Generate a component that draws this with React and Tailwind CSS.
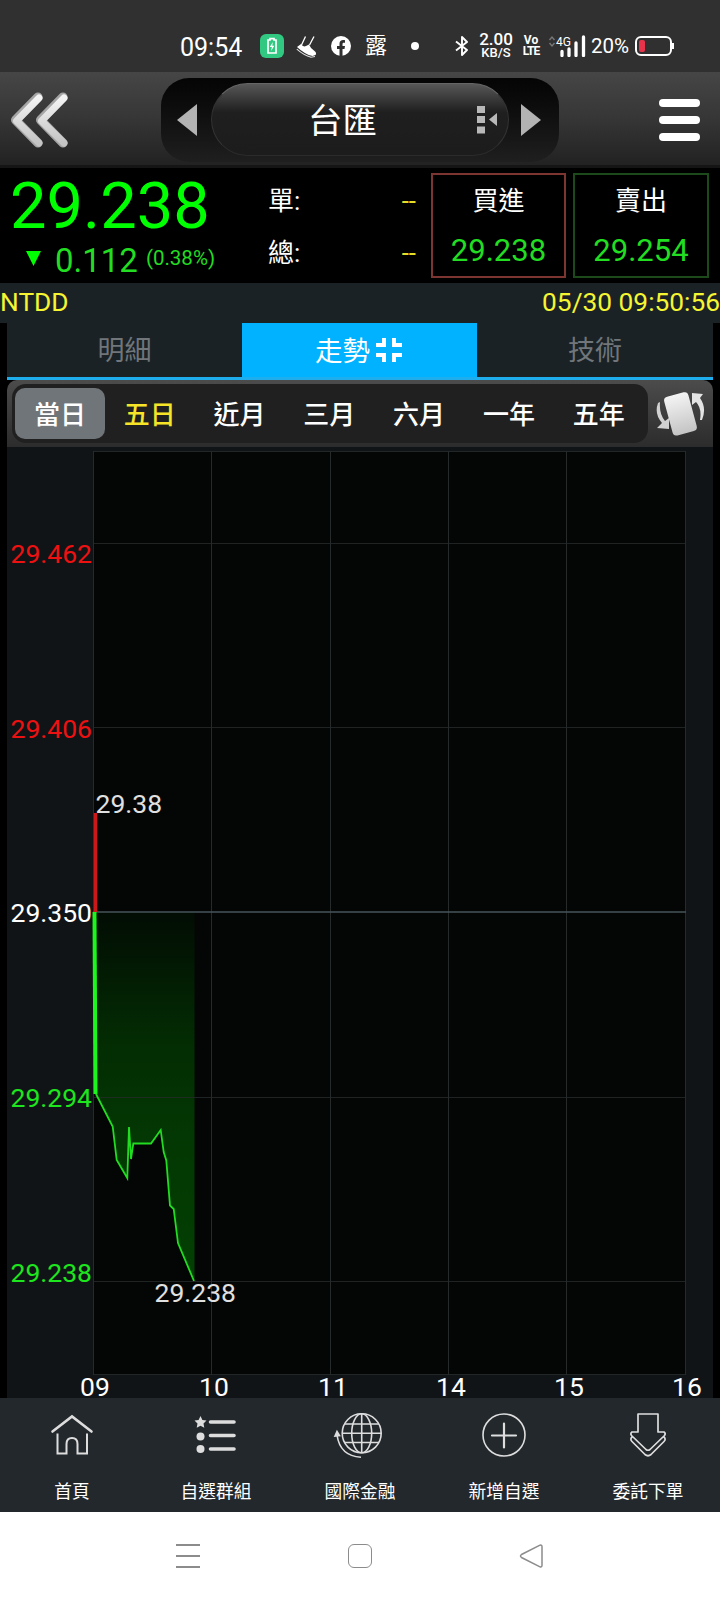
const hours = ['09', '10', '11', '14', '15', '16'];
const hourX = [95, 214, 333, 451, 569, 687];
const gridX = [93.5, 211.5, 330.5, 448.5, 566.5, 685.5];
const gridY = [451.5, 543.5, 727.5, 1097.5, 1281.5, 1374.5];

const priceLabels = [
  { text: '29.462', y: 563, color: '#ee1111' },
  { text: '29.406', y: 738, color: '#ee1111' },
  { text: '29.350', y: 922, color: '#ffffff' },
  { text: '29.294', y: 1107, color: '#1ee61e' },
  { text: '29.238', y: 1282, color: '#1ee61e' },
];

const trend =
  '96,1094 112.7,1126.5 116.7,1160 127.3,1178 129,1127 131,1159 133.3,1143.5 151,1143.5 160.7,1130 163.7,1152 166.3,1160.5 170,1205.5 173.7,1209 178,1243 194,1281';

const ranges = ['當日', '五日', '近月', '三月', '六月', '一年', '五年'];

function StatusBar() {
  return (
    <div className="h-[72px] bg-[#303030] flex items-center pt-5 text-white">
      <span className="ml-[180px] w-[80px] pt-[2px] text-[25px] leading-none">09:54</span>
      <svg className="w-6 h-6" viewBox="0 0 24 24">
        <rect width="24" height="24" rx="6" fill="#31c981" />
        <path d="M8 6h2V4.6h4V6h2v13H8z" fill="none" stroke="#fff" strokeWidth="1.7" />
        <path d="M12.8 8 9.8 13h2l-.7 4 3.2-5.200h-2z" fill="#fff" />
      </svg>
      <svg className="ml-3 w-[22px] h-[24px]" viewBox="0 0 22 24">
        <path d="M9.500 2.500 5.500 11M18 2.500 13.500 11" stroke="#fff" strokeWidth="1.300" fill="none" />
        <path d="M1 13l4-3q2 3.500 5 2l3-1.500q1.500 4 5.500 6.500 2.500 2 1 4l-3 1Q9 20.500 1 13z" fill="#fff" />
        <path d="M.8 15.200Q8 21.500 15 23.200l4-.7" stroke="#ddd" strokeWidth="1.100" fill="none" />
      </svg>
      <svg className="ml-[13px] w-5 h-5" viewBox="0 0 20 20">
        <circle cx="10" cy="10" r="10" fill="#fff" />
        <path d="M8.500 20v-7H6v-3h2.500V7.800C8.500 5.200 10 4 12.200 4c1 0 1.800.2 1.800.2v2.500h-1.200c-1 0-1.300.6-1.300 1.400V10h2.500l-.5 3h-2v7z" fill="#303030" />
      </svg>
      <span className="ml-[14px] w-[22px] text-[22px] leading-none">露</span>
      <span className="ml-[24px] w-2 h-2 rounded-full bg-white" />
      <svg className="ml-[35px] w-4 h-5" viewBox="0 0 16 20">
        <path d="M2 5.500 13 14 8 19V1l5 5L2 14.500" fill="none" stroke="#fff" strokeWidth="1.9" strokeLinejoin="round" />
      </svg>
      <div className="ml-2 w-[36px] text-center font-medium">
        <div className="text-[17px] leading-[13px]">2.00</div>
        <div className="text-[13px] leading-[13px]">KB/S</div>
      </div>
      <div className="ml-2 w-[18px] text-center font-bold">
        <div className="text-[12px] leading-[11px]">Vo</div>
        <div className="text-[12px] leading-[11px] tracking-[-1px]">LTE</div>
      </div>
      <svg className="ml-[8px] w-[38px] h-[22px]" viewBox="0 0 38 22">
        <path d="m1.500 5 2.500-3 2.500 3M1.500 8 4 11l2.500-3" fill="none" stroke="#777" strokeWidth="1.400" />
        <text x="8" y="11" fontSize="13" fill="#fff" textLength="15" lengthAdjust="spacingAndGlyphs">4G</text>
        <path d="M14 16.500v4M21 14v6.500M28 8v12.500M35.500 2v18.500" stroke="#fff" strokeWidth="3.300" strokeLinecap="round" />
      </svg>
      <span className="ml-[5px] w-[44px] text-[20.500px] leading-none">20%</span>
      <svg className="w-[40px] h-5" viewBox="0 0 40 20">
        <rect x="1" y="1" width="35" height="18" rx="5" fill="none" stroke="#fff" strokeWidth="2" />
        <rect x="4" y="4" width="6" height="12" rx="2" fill="#e8344a" />
        <path d="M38 7v6" stroke="#fff" strokeWidth="2" />
      </svg>
    </div>
  );
}

function Header() {
  return (
    <div className="h-24 bg-linear-to-b from-[#464646] via-[#363636] to-[#222] border-b-3 border-[#151515] pt-[2px] flex items-center">
      <svg className="ml-[9px] w-[62px] h-[60px]" viewBox="0 0 62 60">
        <defs>
          <linearGradient id="metal" x1="0" y1="0" x2="0" y2="1">
            <stop offset="0" stopColor="#f4f4f4" />
            <stop offset="1" stopColor="#c4c4c4" />
          </linearGradient>
        </defs>
        <path d="M29 7 6.500 30 29 53M54 7 31.500 30 54 53" fill="none" stroke="#a5a5a5" strokeWidth="9" strokeLinecap="round" strokeLinejoin="round" />
        <path d="M30 8 7.500 31 30 53M55 8 32.500 31 55 53" fill="none" stroke="url(#metal)" strokeWidth="7" strokeLinecap="round" strokeLinejoin="round" />
      </svg>
      <div className="ml-[90px] w-[398px] h-[84px] rounded-[28px] bg-linear-to-b from-[#050505] to-[#1f1f1f] flex items-center px-4">
        <svg className="w-5 h-8" viewBox="0 0 20 32">
          <path d="M20 0v32L0 16z" fill="#b3b3b3" />
        </svg>
        <div className="ml-[14px] w-[298px] h-[73px] rounded-full bg-linear-to-b from-[#585858] via-[#1f1f1f] via-40% to-[#1c1c1c] border border-t-[#666] border-x-[#333] border-b-[#2b2b2b] flex items-center">
          <div className="flex-1 pl-[96px] pt-[3px] text-white text-[34.500px] leading-none">台匯</div>
          <svg className="mr-[10px] w-[22px] h-[30px]" viewBox="0 0 22 30">
            <path d="M1 1h8v7H1zM1 11h8v7H1zM1 21.500h8v7H1zM21 8v13l-8-6.500z" fill="#b8b8b8" />
          </svg>
        </div>
        <svg className="ml-[12px] w-5 h-8" viewBox="0 0 20 32">
          <path d="M0 0v32l20-16z" fill="#b3b3b3" />
        </svg>
      </div>
      <div className="ml-auto mr-5 flex flex-col gap-[9px]">
        <div className="w-[41px] h-2 rounded-full bg-white" />
        <div className="w-[41px] h-2 rounded-full bg-white" />
        <div className="w-[41px] h-2 rounded-full bg-white" />
      </div>
    </div>
  );
}

function Quote() {
  return (
    <div className="h-[115px] bg-black flex">
      <div className="w-[268px] pl-[10px]">
        <div className="mt-[6px] h-[64px] text-[65px] leading-[64px] text-[#00ff00]">29.238</div>
        <div className="flex items-center h-[40px] text-[#22dd22]">
          <svg className="ml-4 w-[15px] h-[15px]" viewBox="0 0 15 15">
            <path d="M0 0h15L7.500 15z" fill="#00ff00" />
          </svg>
          <span className="ml-[14px] pt-1 text-[33px] leading-none">0.112</span>
          <span className="ml-[8px] text-[20.500px] leading-none">(0.38%)</span>
        </div>
      </div>
      <div className="w-[148px] pt-[7px] text-[26px] text-white">
        <div className="flex justify-between h-[52px] items-center">
          <span>單:</span>
          <span className="text-[#e6dc28]">--</span>
        </div>
        <div className="flex justify-between h-[52px] items-center">
          <span>總:</span>
          <span className="text-[#e6dc28]">--</span>
        </div>
      </div>
      <div className="ml-[15px] mt-[5px] w-[135px] h-[105px] border-2 border-[#7d3532] text-center">
        <div className="h-[50px] leading-[52px] text-[26px] text-white">買進</div>
        <div className="h-[50px] leading-[52px] text-[31px] text-[#22dd22]">29.238</div>
      </div>
      <div className="ml-[7px] mt-[5px] w-[136px] h-[105px] border-2 border-[#1d4a1a] text-center">
        <div className="h-[50px] leading-[52px] text-[26px] text-white">賣出</div>
        <div className="h-[50px] leading-[52px] text-[31px] text-[#22dd22]">29.254</div>
      </div>
    </div>
  );
}

function Tabs() {
  return (
    <div className="h-[57px] bg-black px-[7px]">
      <div className="h-full grid grid-cols-[235px_235px_236px] bg-[#1b2226] border-b-3 border-[#1eaeee] text-[27px] text-[#70767a]">
        <div className="flex items-center justify-center pt-[3px]">明細</div>
        <div className="flex items-center justify-center gap-[6px] pr-[2px] bg-[#00b2ff] text-[27.500px] text-white">
          <span className="pt-[3px]">走勢</span>
          <svg className="w-[26px] h-[26px]" viewBox="0 0 26 26">
            <path d="M0 8h8V1M18 1v7h8M0 18h8v7M18 25v-7h8" fill="none" stroke="#fff" strokeWidth="4" />
          </svg>
        </div>
        <div className="flex items-center justify-center pt-[3px]">技術</div>
      </div>
    </div>
  );
}

function RangeBar() {
  return (
    <div className="h-[67px] bg-black px-[7px]">
      <div className="h-full rounded-t-[10px] bg-linear-to-b from-[#4c4c4c] to-[#2c2c2c] flex items-center">
        <div className="ml-[5px] w-[636px] h-[59px] rounded-[14px] bg-[#202020] flex items-center pl-[3px]">
          {ranges.map((name, i) => (
            <div
              key={name}
              className={`w-[89.8px] h-[51px] pt-[3px] rounded-[10px] flex items-center justify-center text-[26px] font-medium ${
                i === 0 ? 'bg-[#70757a] text-white' : i === 1 ? 'text-[#f5e428]' : 'text-white'
              }`}
            >
              {name}
            </div>
          ))}
        </div>
        <svg className="ml-[7px] w-[50px] h-[48px]" viewBox="0 0 50 48">
          <path d="M3 13q-4 11 4 20l-5 5 12 1V28l-4 3Q4 24 5 12z" fill="#d2d2d2" />
          <path d="M37 3l11 1-3 4q7 10 2 22h-2q2-12-4-18l-4 3z" fill="#e4e4e4" />
          <rect x="13" y="4" width="25" height="40" rx="4" transform="rotate(-15 25 24)" fill="url(#metal)" />
        </svg>
      </div>
    </div>
  );
}

function Chart() {
  return (
    <div className="h-[951px] bg-black px-[7px]">
      <svg className="block w-[706px] h-[951px] overflow-visible" viewBox="7 447 706 951" fontSize="26.5">
        <defs>
          <linearGradient id="loss" gradientUnits="userSpaceOnUse" x1="0" y1="912" x2="0" y2="1281">
            <stop offset="0" stopColor="#020c03" />
            <stop offset="0.35" stopColor="#032c03" />
            <stop offset="0.6" stopColor="#033703" />
            <stop offset="1" stopColor="#034003" />
          </linearGradient>
        </defs>
        <rect x="7" y="447" width="706" height="951" fill="#111417" />
        <rect x="94" y="452" width="591" height="922" fill="#040605" />
        <polygon points={`96,912 ${trend} 194.500,1281 194.500,912`} fill="url(#loss)" />
        {gridX.map((x) => (
          <path key={x} d={`M${x} 451V1375`} stroke="#272a2a" />
        ))}
        {gridY.map((y) => (
          <path key={y} d={`M93 ${y}H686`} stroke="#272a2a" strokeOpacity="0.8" />
        ))}
        <path d="M93 912H686" stroke="#46555a" strokeWidth="1.300" />
        <path d="M95.500 813V912" stroke="#cc1818" strokeWidth="3.500" />
        <path d="M94.500 912L95.500 1094" stroke="#1ef51e" strokeWidth="4" />
        <polyline points={trend} fill="none" stroke="#22dc22" strokeWidth="1.800" />
        {priceLabels.map((l) => (
          <text key={l.text} x="10.500" y={l.y} fill={l.color}>{l.text}</text>
        ))}
        <text x="95.500" y="813" fill="#e0e0e0">29.38</text>
        <text x="154.500" y="1302" fill="#e0e0e0">29.238</text>
        {hours.map((h, i) => (
          <text key={h} x={hourX[i]} y="1396" textAnchor="middle" fill="#fff">{h}</text>
        ))}
      </svg>
    </div>
  );
}

const navItems = [
  {
    label: '首頁',
    icon: (
      <g strokeWidth="2">
        <path d="M4.500 20.500 24 5.500l19.500 15" strokeWidth="2.600" strokeLinecap="round" />
        <path d="M9.500 22.500V42.500h9V33q0-6 5.500-6t5.500 6v9.500h9.500V22.500" />
      </g>
    ),
  },
  {
    label: '自選群組',
    icon: (
      <g>
        <path d="m8.500 5 1.900 3.900 4.100.5-3 3 .8 4.300-3.800-2-3.800 2 .8-4.300-3-3 4.100-.5z" fill="#ddd" stroke="none" />
        <circle cx="8.500" cy="25.500" r="4" fill="#ddd" stroke="none" />
        <circle cx="8.500" cy="38" r="4" fill="#ddd" stroke="none" />
        <path d="M18.500 11h23.500M18.500 24.500h23.500M18.500 38h23.500" strokeWidth="3.600" strokeLinecap="round" />
      </g>
    ),
  },
  {
    label: '國際金融',
    icon: (
      <g strokeWidth="1.600">
        <circle cx="25.700" cy="22.300" r="19.500" />
        <ellipse cx="25.700" cy="22.300" rx="10" ry="19.500" />
        <path d="M25.700 2.800v39M6.200 22.300h39M8.700 13h34M8.700 31.500h34" />
        <path d="M1 24Q4 45 25 46.300" />
        <path d="M-1 25l2-4.500 2.500 4z" fill="#ddd" />
      </g>
    ),
  },
  {
    label: '新增自選',
    icon: (
      <g strokeWidth="1.600">
        <circle cx="24" cy="24" r="21" />
        <path d="M24 12.500v24M12 24.500h24" strokeWidth="2.200" strokeLinecap="round" />
      </g>
    ),
  },
  {
    label: '委託下單',
    icon: (
      <g strokeWidth="1.700" strokeLinejoin="round">
        <path d="M14 3h20v18h6q2 1.500.5 3.500L26 38.500q-2 1.500-4 0L7.500 24.500q-1.500-2 .5-3.500h6z" />
        <path d="M8.500 25.500q-3 2.500-.5 5l13 13q3 2.500 6 0l13-13q2.500-2.500-.5-5" />
      </g>
    ),
  },
];

function BottomNav() {
  return (
    <div className="h-[114px] bg-[#23282c] grid grid-cols-5">
      {navItems.map((item) => (
        <div key={item.label} className="flex flex-col items-center pt-[13px] text-white">
          <svg className="w-12 h-12 overflow-visible" viewBox="0 0 48 48" fill="none" stroke="#ddd">
            {item.icon}
          </svg>
          <span className="mt-[21px] text-[17.700px] leading-6">{item.label}</span>
        </div>
      ))}
    </div>
  );
}

function SystemNav() {
  return (
    <div className="h-[88px] bg-white flex items-center">
      <svg className="ml-[175px] w-[26px] h-[26px]" viewBox="0 0 26 26" stroke="#8c8c8c" strokeWidth="2">
        <path d="M1 2h24M1 13h24M1 24h24" />
      </svg>
      <div className="ml-[147px] w-6 h-6 rounded-[6px] border-[1.500px] border-[#8c8c8c]" />
      <svg className="ml-[147px] w-[26px] h-[26px]" viewBox="0 0 26 26" fill="none" stroke="#8c8c8c" strokeWidth="1.500">
        <path d="M21 2.200 2.500 11.500q-2 1.500 0 3L21 23.800q2 .6 2-1.500V3.700q0-2-2-1.500z" />
      </svg>
    </div>
  );
}

export default function App() {
  return (
    <div className="w-[720px] h-[1600px] overflow-hidden bg-black font-['Roboto','Noto_Sans_CJK_TC',sans-serif]">
      <StatusBar />
      <Header />
      <Quote />
      <div className="h-10 bg-[#1b2226] flex items-center justify-between text-[26.300px] text-[#f5f532]">
        <span>NTDD</span>
        <span>05/30 09:50:56</span>
      </div>
      <Tabs />
      <RangeBar />
      <Chart />
      <BottomNav />
      <SystemNav />
    </div>
  );
}
